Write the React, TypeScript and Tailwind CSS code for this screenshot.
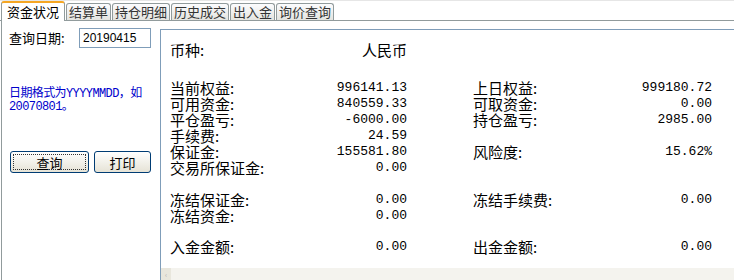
import React from "react";

const tabs = ["资金状况", "结算单", "持仓明细", "历史成交", "出入金", "询价查询"];

type Cell = { label: string; value: string } | null;

// rows: [left cell, right cell, top margin]
const rows: { left: Cell; right: Cell; mt: string }[] = [
  { left: { label: "币种:", value: "人民币" }, right: null, mt: "mt-[12px]" },
  { left: { label: "当前权益:", value: "996141.13" }, right: { label: "上日权益:", value: "999180.72" }, mt: "mt-[22px]" },
  { left: { label: "可用资金:", value: "840559.33" }, right: { label: "可取资金:", value: "0.00" }, mt: "mt-0" },
  { left: { label: "平仓盈亏:", value: "-6000.00" }, right: { label: "持仓盈亏:", value: "2985.00" }, mt: "mt-0" },
  { left: { label: "手续费:", value: "24.59" }, right: null, mt: "mt-0" },
  { left: { label: "保证金:", value: "155581.80" }, right: { label: "风险度:", value: "15.62%" }, mt: "mt-0" },
  { left: { label: "交易所保证金:", value: "0.00" }, right: null, mt: "mt-0" },
  { left: { label: "冻结保证金:", value: "0.00" }, right: { label: "冻结手续费:", value: "0.00" }, mt: "mt-[16px]" },
  { left: { label: "冻结资金:", value: "0.00" }, right: null, mt: "mt-0" },
  { left: { label: "入金金额:", value: "0.00" }, right: { label: "出金金额:", value: "0.00" }, mt: "mt-[15px]" },
];

function Field({ cell }: { cell: Cell }) {
  if (!cell) return <div />;
  const isCny = cell.value === "人民币";
  return (
    <div className="flex justify-between items-center">
      <span className="font-['Noto_Sans_CJK_SC',sans-serif] text-[15px] leading-[16px]">{cell.label}</span>
      <span
        className={
          isCny
            ? "font-['Noto_Sans_CJK_SC',sans-serif] text-[15px] leading-[16px]"
            : "font-['Liberation_Mono','Noto_Sans_CJK_SC',monospace] text-[13px] leading-[16px]"
        }
      >
        {cell.value}
      </span>
    </div>
  );
}

export default function App() {
  return (
    <div className="w-[734px] h-[280px] bg-white overflow-hidden flex flex-col text-black font-['Noto_Sans_CJK_SC',sans-serif]">
      {/* Tab strip */}
      <div className="h-[21px] flex items-end gap-[1px] pl-[1px] border-b border-[#919b9c] border-t border-t-[#e6e6e6]">
        {tabs.map((t, i) =>
          i === 0 ? (
            <div
              key={t}
              className="h-[20px] px-[5px] bg-white border-x border-[#919b9c] border-t-2 border-t-[#f5a623] rounded-t-[3px] text-[13px] leading-[17px] -mb-[1px] relative"
            >
              {t}
            </div>
          ) : (
            <div
              key={t}
              className="h-[17px] px-[2px] bg-gradient-to-b from-[#fcfcfe] to-[#e4e4e0] border border-b-0 border-[#919b9c] rounded-t-[3px] text-[13px] leading-[16px] text-[#333]"
            >
              {t}
            </div>
          )
        )}
      </div>

      <div className="flex flex-1 min-h-0">
        {/* Left query panel */}
        <div className="w-[159px] border-l border-[#919b9c] ml-[1px] flex flex-col">
          <div className="flex items-center mt-[7px] pl-[7px]">
            <span className="text-[13px] leading-[16px] w-[70px]">查询日期:</span>
            <div className="w-[72px] h-[20px] border border-[#7f9db9] pl-[3px] font-['Liberation_Sans',sans-serif] text-[12px] leading-[18px]">
              20190415
            </div>
          </div>
          <div className="mt-[40px] pl-[7px] text-[#0000cc] font-['Liberation_Mono','Noto_Sans_CJK_SC',monospace] text-[12px] leading-[13px] tracking-[-0.6px]">
            <div>日期格式为YYYYMMDD，如</div>
            <div>20070801。</div>
          </div>
          <div className="flex gap-[5px] mt-[37px] pl-[8px]">
            <button className="w-[79px] h-[22px] rounded-[3px] border border-[#003c74] bg-gradient-to-b from-white to-[#e6e3d6] p-[2px]">
              <div className="w-full h-full border border-dotted border-[#333] flex items-center justify-center text-[13px] leading-none">
                查询
              </div>
            </button>
            <button className="w-[57px] h-[22px] rounded-[3px] border border-[#003c74] bg-gradient-to-b from-white to-[#e6e3d6] flex items-center justify-center text-[13px] leading-none">
              打印
            </button>
          </div>
        </div>

        {/* Right content panel */}
        <div className="flex-1 pt-[8px]">
          <div className="h-full border-t border-l border-[#7f9db9] flex flex-col">
            <div className="flex-1 pl-[9px]">
              {rows.map((r, i) => (
                <div key={i} className={`grid grid-cols-[237px_66px_239px] ${r.mt}`}>
                  <Field cell={r.left} />
                  <div />
                  <Field cell={r.right} />
                </div>
              ))}
            </div>
            <div className="h-[12px] bg-[#f4f3ee] flex">
              <div className="w-[10px] h-full bg-[#e8e6dc] flex items-center justify-center text-[7px] text-[#b0b0b0]">
                ‹
              </div>
            </div>
          </div>
        </div>
      </div>
    </div>
  );
}
